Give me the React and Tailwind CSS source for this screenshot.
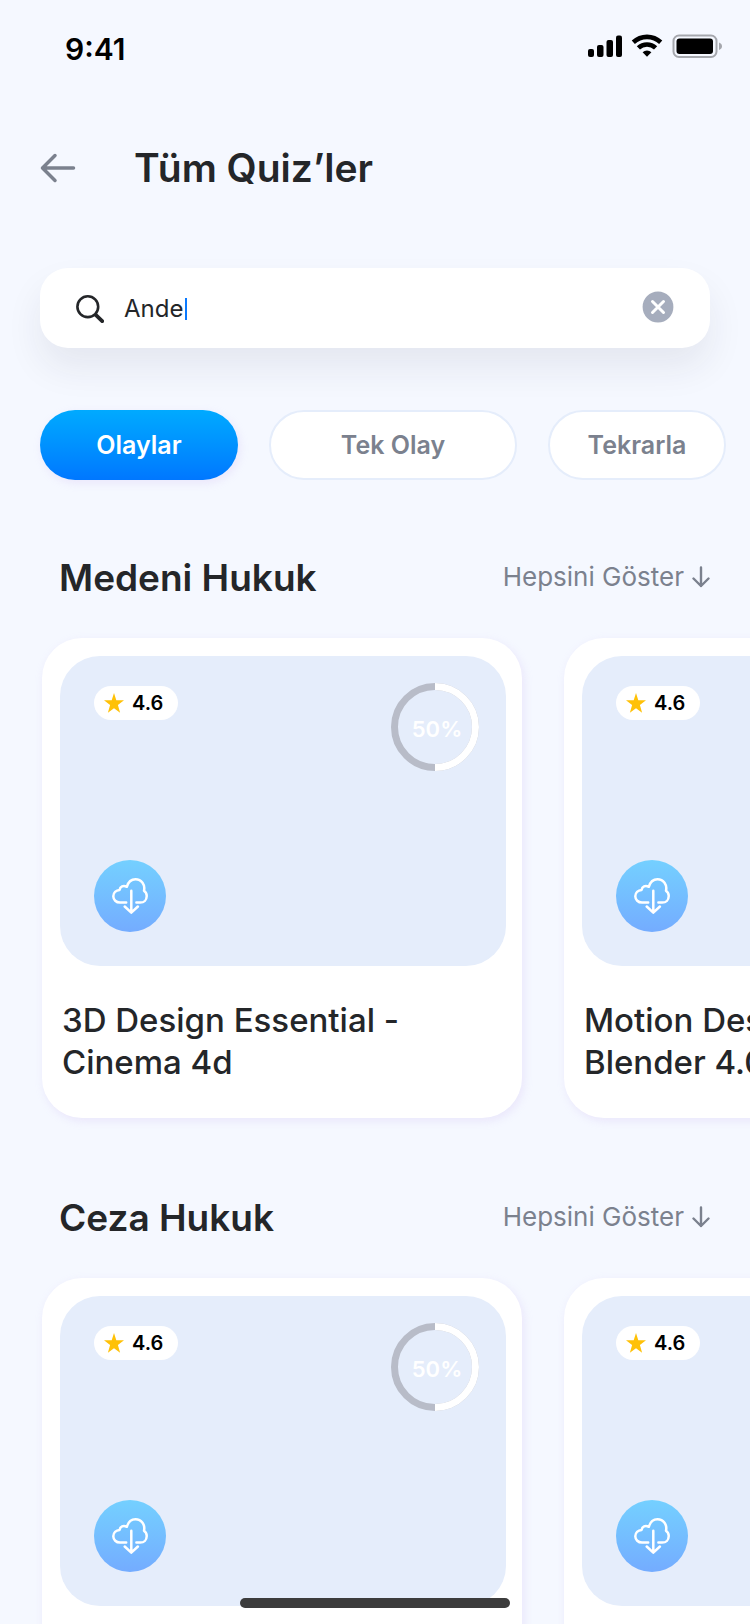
import { useState } from "react";

const filters = [
  { label: "Olaylar", width: "min-w-[198px]" },
  { label: "Tek Olay", width: "min-w-[248px]" },
  { label: "Tekrarla", width: "min-w-[178px]" },
];

const quizzes = [
  { lines: ["3D Design Essential -", "Cinema 4d"], rating: "4.6", progress: 50 },
  { lines: ["Motion Design -", "Blender 4.0"], rating: "4.6", progress: 50 },
];

const sections = ["Medeni Hukuk", "Ceza Hukuk"];

function StatusBar() {
  return (
    <div className="flex h-[98px] shrink-0 items-center justify-between pl-[65px] pr-7">
      <span className="text-[30px] font-semibold leading-9 text-black">9:41</span>
      <svg className="-mt-1.5 h-6 w-[136px]" viewBox="0 0 136 24" fill="none" aria-hidden="true">
        <g fill="#000">
          <rect x="2" y="15" width="6" height="8" rx="2" />
          <rect x="11" y="11" width="6.5" height="12" rx="2" />
          <rect x="20.500" y="6" width="6.500" height="17" rx="2" />
          <rect x="30" y="1.500" width="6" height="21.500" rx="2" />
        </g>
        <g stroke="#000" strokeWidth="4.600">
          <path d="M47.300 8.300a20 20 0 0 1 27.400 0" />
          <path d="M52.400 13.900a12.400 12.400 0 0 1 17.200 0" />
        </g>
        <path d="M56.600 18.200a6.600 6.600 0 0 1 8.800 0L61 22.800z" fill="#000" />
        <rect x="87.500" y="1.500" width="43" height="21.500" rx="5.500" stroke="#a5a7ad" strokeWidth="2" />
        <rect x="90.500" y="4.500" width="36.500" height="15.500" rx="3" fill="#000" />
        <path d="M133 8.500c2 .8 3 2 3 3.700s-1 3-3 3.700z" fill="#a5a7ad" />
      </svg>
    </div>
  );
}

function ProgressRing({ value }) {
  return (
    <div className="relative size-22">
      <svg className="size-22" viewBox="0 0 88 88" fill="none" strokeWidth="7" aria-hidden="true">
        <circle cx="44" cy="44" r="40.500" stroke="#b8bcc8" />
        <circle cx="44" cy="44" r="40.500" stroke="#fff" pathLength="100" strokeDasharray={`${value} 100`} transform="rotate(-90 44 44)" />
      </svg>
      <span className="absolute inset-0 flex items-center justify-center pl-1 pt-1 text-[22px] font-semibold leading-7 text-white">
        {value}%
      </span>
    </div>
  );
}

function QuizCard({ quiz }) {
  return (
    <article className="h-[480px] w-[480px] shrink-0 rounded-[40px] bg-white pb-10 pl-[18px] pr-4 pt-[18px] shadow-[2px_3px_10px_rgba(190,160,235,0.20)]">
      <div className="flex h-[310px] flex-col justify-between rounded-[40px] bg-[#e5edfb] pb-[34px] pl-[34px] pr-[27px] pt-[27px]">
        <div className="flex items-start justify-between">
          <div className="mt-[3px] flex h-[34px] w-[84px] items-center gap-2 rounded-full bg-white pl-2.5">
            <svg className="size-5" viewBox="0 0 20 20" aria-hidden="true">
              <path d="M10 0l2.300 7.300H20l-6.100 4.700 2.200 7.700L10 15.200l-6.100 4.500L6.100 12 0 7.300h7.700z" fill="#ffc107" />
            </svg>
            <span className="text-xl font-semibold leading-6 text-black">{quiz.rating}</span>
          </div>
          <ProgressRing value={quiz.progress} />
        </div>
        <button
          type="button"
          aria-label={`${quiz.lines.join(" ")} indir`}
          className="flex size-18 items-center justify-center rounded-full bg-linear-to-b from-[#74d0ff] to-[#74acff] text-white"
        >
          <svg className="size-9" viewBox="0 0 36 36" fill="none" stroke="currentColor" strokeWidth="2.500" strokeLinecap="round" strokeLinejoin="round" aria-hidden="true">
            <path d="M14.200 24.600H8C4.200 24.600 1.300 21.800 1.300 18.300C1.300 14.800 4 12.100 7.600 11.900C8 8.500 11.400 6.800 14.800 8.800C16.200 4.200 19.500 1.300 23.500 1.300C29.500 1.300 33.400 6.700 32 12.700C34 14.200 34.800 16 34.700 18.200C34.600 22 32 24.600 28.200 24.600H24.400" />
            <path d="M19.300 12.800V34.200M12.700 28.500L19.300 34.700L25.900 28.500" />
          </svg>
        </button>
      </div>
      <h3 className="mt-[33px] whitespace-nowrap pl-0.5 text-[33px] font-medium leading-[42px] text-[#242629]">
        {quiz.lines[0]}
        <br />
        {quiz.lines[1]}
      </h3>
    </article>
  );
}

function QuizSection({ title }) {
  return (
    <section className="shrink-0">
      <div className="flex h-[76px] items-center justify-between pl-[59px] pr-10">
        <h2 className="text-[37px] font-semibold leading-[46px] text-[#242629]">{title}</h2>
        <a href="#all" className="flex items-center gap-2 pb-0.5 text-[26px] leading-8 text-[#7b818e]">
          Hepsini Göster
          <svg className="h-6 w-[18px]" viewBox="0 0 18 24" fill="none" stroke="currentColor" strokeWidth="2.400" strokeLinecap="round" strokeLinejoin="round" aria-hidden="true">
            <path d="M9 2.500V21M1.500 13.500L9 21L16.500 13.500" />
          </svg>
        </a>
      </div>
      <div className="flex gap-[42px] overflow-x-auto px-[42px] pb-[62px] pt-[22px] [scrollbar-width:none]">
        {quizzes.map((quiz) => (
          <QuizCard key={quiz.lines[0]} quiz={quiz} />
        ))}
      </div>
    </section>
  );
}

export default function App() {
  const [query, setQuery] = useState("Ande");
  const [active, setActive] = useState("Olaylar");

  return (
    <div className="relative flex h-screen flex-col overflow-hidden bg-[#f5f8ff] font-['Inter',sans-serif]">
      <StatusBar />
      <header className="flex h-[140px] shrink-0 items-center gap-[58px] px-10">
        <button type="button" aria-label="Geri" className="text-[#7b818e]">
          <svg className="h-8 w-9" viewBox="0 0 36 32" fill="none" stroke="currentColor" strokeWidth="3.500" strokeLinecap="round" strokeLinejoin="round" aria-hidden="true">
            <path d="M33.500 16H2.500M15 3.500L2.500 16L15 28.500" />
          </svg>
        </button>
        <h1 className="text-[39px] font-semibold leading-[50px] text-[#242629]">Tüm Quiz’ler</h1>
      </header>
      <main className="flex min-h-0 grow flex-col overflow-y-auto pt-[30px] [scrollbar-width:none]">
        <label className="mx-10 flex h-20 shrink-0 items-center rounded-[28px] bg-white px-9 pt-0.5 shadow-[0_20px_36px_rgba(35,38,60,0.08)]">
          <svg className="mr-5 h-7 w-7" viewBox="0 0 28 28" fill="none" stroke="#242629" strokeLinecap="round" aria-hidden="true">
            <circle cx="11.800" cy="11.700" r="10.400" strokeWidth="2.600" />
            <path d="M20 20.200L26.200 26.200" strokeWidth="3.800" />
          </svg>
          <input
            aria-label="Quiz ara"
            value={query}
            onChange={(event) => setQuery(event.target.value)}
            className="bg-transparent text-[24px] leading-8 text-[#242629] caret-[#0a7aff] outline-none [field-sizing:content]"
          />
          <span className="ml-0.5 h-[22px] w-0.5 bg-[#0a7aff]" />
          <button type="button" aria-label="Temizle" onClick={() => setQuery("")} className="-mt-1 ml-auto">
            <svg className="h-8 w-8" viewBox="0 0 32 32" fill="none" aria-hidden="true">
              <circle cx="16" cy="16" r="15.400" fill="#a6adbd" />
              <path d="M10.500 10.500L21.500 21.500M21.500 10.500L10.500 21.500" stroke="#fff" strokeWidth="3" strokeLinecap="round" />
            </svg>
          </button>
        </label>
        <div className="mt-[50px] flex shrink-0 gap-[31px] overflow-x-auto px-10 pb-3 pt-3 [scrollbar-width:none]">
          {filters.map(({ label, width }) => (
            <button
              key={label}
              type="button"
              aria-pressed={active === label}
              onClick={() => setActive(label)}
              className={`h-[70px] shrink-0 rounded-full text-[25px] font-semibold leading-8 ${width} ${
                active === label
                  ? "bg-linear-to-b from-[#00aaff] to-[#0077ff] text-white shadow-[2px_3px_10px_rgba(190,160,235,0.20)]"
                  : "border-2 border-[#e5edfb] bg-white text-[#7b818e]"
              }`}
            >
              {label}
            </button>
          ))}
        </div>
        <div className="pt-12">
          {sections.map((title) => (
            <QuizSection key={title} title={title} />
          ))}
        </div>
      </main>
      <div className="absolute bottom-4 left-1/2 h-2.5 w-[270px] -translate-x-1/2 rounded-full bg-[#3c3c3c]" />
    </div>
  );
}
